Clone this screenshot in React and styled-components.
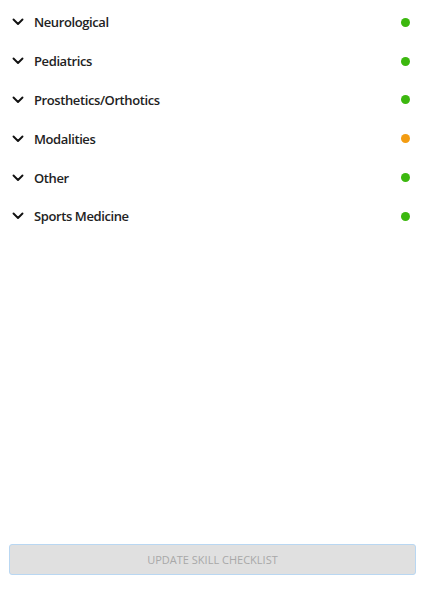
import React from 'react'
import styled, { createGlobalStyle } from 'styled-components'

const GlobalStyle = createGlobalStyle`
  html, body {
    margin: 0;
    padding: 0;
    background: #fff;
    font-family: "Open Sans", "Liberation Sans", sans-serif;
  }
`

const sections = [
  { name: 'Neurological', status: 'done' },
  { name: 'Pediatrics', status: 'done' },
  { name: 'Prosthetics/Orthotics', status: 'done' },
  { name: 'Modalities', status: 'partial' },
  { name: 'Other', status: 'done' },
  { name: 'Sports Medicine', status: 'done' },
]

function Chevron() {
  return (
    <svg width="12" height="8" viewBox="0 0 12 8">
      <path d="M1.5 1.5 L6 6 L10.5 1.5" fill="none" stroke="#111" strokeWidth="1.9" strokeLinecap="round" strokeLinejoin="round" />
    </svg>
  )
}

export default function App() {
  return (
    <>
      <GlobalStyle />
      <Page>
        <List>
          {sections.map((s) => (
            <Row key={s.name}>
              <Arrow>
                <Chevron />
              </Arrow>
              <Title>{s.name}</Title>
              <Dot status={s.status} />
            </Row>
          ))}
        </List>
        <Footer>
          <UpdateButton disabled>Update Skill Checklist</UpdateButton>
        </Footer>
      </Page>
    </>
  )
}

const Page = styled.div`
  width: 423px;
  height: 590px;
  display: flex;
  flex-direction: column;
  justify-content: space-between;
`
const List = styled.ul`
  list-style: none;
  margin: 0;
  padding: 3px 0 0;
`
const Row = styled.li`
  height: 38.8px;
  display: flex;
  align-items: center;
  padding: 0 13px 0 12px;
`
const Arrow = styled.span`
  width: 22px;
  display: flex;
  align-items: center;
`
const Title = styled.span`
  flex: 1;
  font-size: 13px;
  font-weight: 600;
  letter-spacing: -0.4px;
  color: #222;
`
const Dot = styled.span`
  width: 9px;
  height: 9px;
  border-radius: 50%;
  background: ${(p) => (p.status === 'partial' ? '#f39c12' : '#3cb80f')};
`
const Footer = styled.div`
  padding: 0 7px 15px 9px;
`
const UpdateButton = styled.button`
  width: 100%;
  height: 31px;
  background: #e0e0e0;
  border: 1px solid #b9d7f2;
  border-radius: 3px;
  color: #a8a8a8;
  font-family: "Open Sans", "Liberation Sans", sans-serif;
  font-size: 11px;
  text-transform: uppercase;
  padding: 0;
`
